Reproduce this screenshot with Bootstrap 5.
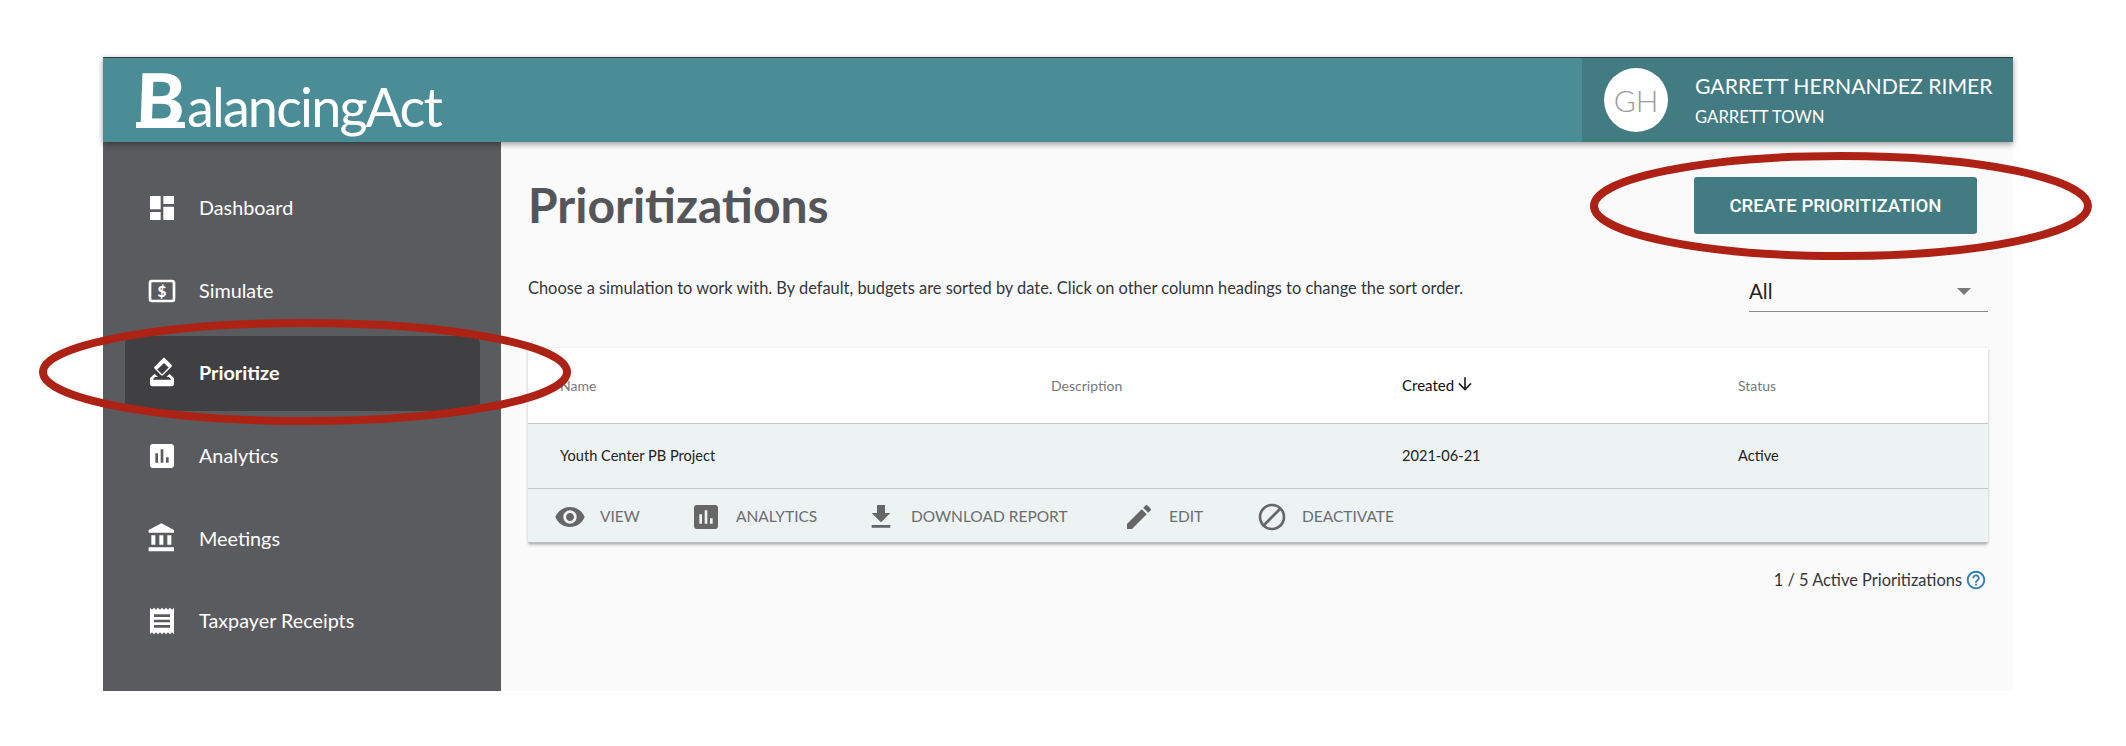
<!doctype html>
<html lang="en">
<head>
<meta charset="utf-8">
<title>Prioritizations</title>
<link href="https://cdn.jsdelivr.net/npm/bootstrap@5.3.0/dist/css/bootstrap.min.css" rel="stylesheet">
<style>
html,body{height:746px;overflow:hidden;background:#fff}
body{font-family:"Lato",sans-serif;position:relative;padding:57px 113px 55px 103px}
.ba-app{width:1910px;height:634px;background:#fafafa;display:flex;flex-direction:column}
.ba-top{height:85px;flex:none;background:#4b8d96;border-top:1px solid #2c3e42;box-shadow:0 2px 6px rgba(0,0,0,.4);position:relative;z-index:2;display:flex;justify-content:space-between}
.ba-logo{display:flex;align-items:baseline;color:#fff;padding:0 0 0 33px;height:84px;line-height:1;position:relative}
.ba-logo-b{font-family:"Lato",sans-serif;font-weight:900;font-size:74px;width:49px;margin-top:4px;transform:skewX(-2deg);letter-spacing:0}
.ba-logo-bar{position:absolute;left:33px;top:64px;width:49px;height:6px;background:#fff}
.ba-logo-t{font-weight:400;font-size:54px;letter-spacing:-1.85px;margin-left:2px}
.ba-user{width:431px;background:#437b82;display:flex;align-items:center;color:#fff;padding-left:22px}
.ba-avatar{width:64px;height:64px;border-radius:50%;background:#fff;color:#9a9a9a;font-size:30px;font-weight:300;display:flex;align-items:center;justify-content:center;margin-right:27px}
.ba-name{font-size:21.2px;line-height:28px}
.ba-town{font-size:16.7px;line-height:24px;margin-top:5px}
.ba-body{flex:1;display:flex;min-height:0}
.ba-side{width:398px;flex:none;background:#5a5b5f;padding:28.5px 21px 0 22px}
.ba-nav{display:flex;align-items:center;height:75px;margin-bottom:7.6px;color:#fff;font-size:19.8px;padding-left:21px;border-radius:8px;text-decoration:none}
.ba-nav svg{width:32px;height:32px;fill:#fff;flex:none;margin-right:21px}
.ba-nav.is-on{background:#404042;font-weight:700}
.ba-main{flex:1;padding:35px 25px 0 27px;min-width:0}
.ba-head{display:flex;justify-content:space-between;align-items:flex-start;height:82px}
.ba-title{font-size:48px;font-weight:700;color:#54565a;margin:0;line-height:56px}
.ba-btn{width:283px;height:57px;margin-right:11px;background:#437b82;border:0;border-radius:3px;color:#fff;font:500 18.6px "Roboto",sans-serif}
.ba-btn:hover{background:#437b82;color:#fff}
.ba-intro{display:flex;justify-content:space-between;align-items:flex-start;height:72px;margin-top:17px}
.ba-intro p{margin:0;font-size:16.4px;line-height:24px;color:#33363b}
.ba-sel{width:239px;height:40px;border-bottom:1px solid #8a8a8a;display:flex;justify-content:space-between;align-items:center;font-size:20.5px;color:#222;font-weight:400;padding-right:17px;margin-top:-4.5px}
.ba-caret{width:0;height:0;border-left:7px solid transparent;border-right:7px solid transparent;border-top:7px solid #777}
.ba-card{background:#fff;border:0;box-shadow:0 1px 3px rgba(0,0,0,.25);border-radius:2px;overflow:hidden}
.ba-tbl{table-layout:fixed;margin:0;width:100%}
.ba-tbl th,.ba-tbl td{padding:0 0 0 32px;vertical-align:middle;border-color:#c3c7c7;font-size:14.6px;color:#222;box-shadow:none}
.ba-tbl th{height:75px;font-weight:400;color:#77797c;background:#fff;font-size:14px}
.ba-tbl th.is-sort{color:#111;font-size:15px}
.ba-tbl td{height:65px;background:#edf3f3}
.ba-arrow{width:20px;height:20px;fill:#222;vertical-align:-3px;margin-left:-3px}
.ba-acts{height:55px;padding-top:3px;background:#edf3f3;border-bottom:2px solid #bcbebe;display:flex;align-items:center;color:#6b6d6f;font-size:15.5px}
.ba-actrow{display:flex;align-items:center;padding-left:26px}
.ba-actitem{display:flex;align-items:center}
.ba-actitem svg{width:32px;height:32px;fill:#666;margin-right:14px;flex:none}
.ba-count{display:flex;justify-content:flex-end;align-items:center;margin-top:24px;font-size:16.4px;color:#33363b;padding-right:1px}
.ba-count svg{width:22px;height:22px;fill:#2f7fb5;margin-left:3px}
.ba-rings{position:absolute;left:0;top:0;width:2126px;height:746px;z-index:5;pointer-events:none}
.ba-rings ellipse{fill:none;stroke:#ae2215;stroke-width:8}
</style>
</head>
<body>
<div class="ba-app">
  <header class="ba-top">
    <div class="ba-logo"><span class="ba-logo-b">B</span><span class="ba-logo-bar"></span><span class="ba-logo-t">alancingAct</span></div>
    <div class="ba-user">
      <div class="ba-avatar">GH</div>
      <div><div class="ba-name">GARRETT HERNANDEZ RIMER</div><div class="ba-town">GARRETT TOWN</div></div>
    </div>
  </header>
  <div class="ba-body">
    <nav class="ba-side">
      <a class="ba-nav" href="#"><svg viewBox="0 0 24 24"><path d="M3 13h8V3H3v10zm0 8h8v-6H3v6zm10 0h8V11h-8v10zm0-18v6h8V3h-8z"/></svg>Dashboard</a>
      <a class="ba-nav" href="#"><svg viewBox="0 0 24 24"><rect x="3" y="4.5" width="18" height="15" rx="1.5" fill="none" stroke="#fff" stroke-width="2"/><text x="12" y="16.3" text-anchor="middle" font-size="11.5" font-weight="900" fill="#fff" font-family="Lato">$</text></svg>Simulate</a>
      <a class="ba-nav is-on" href="#"><svg viewBox="0 0 24 24"><path d="M18 13h-.68l-2 2h1.91L19 17H5l1.78-2h2.05l-2-2H6l-3 3v4c0 1.1.89 2 1.99 2H19c1.1 0 2-.89 2-2v-4l-3-3zm-1-5.05l-4.95 4.95-3.54-3.54 4.95-4.95L17 7.95zm-4.24-7.07L6.39 7.24c-.39.39-.39 1.02 0 1.41l4.95 4.95c.39.39 1.02.39 1.41 0l6.36-6.36c.39-.39.39-1.02 0-1.41L14.16.88c-.38-.39-1.01-.39-1.4 0z"/></svg>Prioritize</a>
      <a class="ba-nav" href="#"><svg viewBox="0 0 24 24"><path d="M19 3H5c-1.1 0-2 .9-2 2v14c0 1.1.9 2 2 2h14c1.1 0 2-.9 2-2V5c0-1.1-.9-2-2-2zM9 17H7v-7h2v7zm4 0h-2V7h2v10zm4 0h-2v-4h2v4z"/></svg>Analytics</a>
      <a class="ba-nav" href="#"><svg viewBox="0 0 24 24"><path d="M4 10v7h3v-7H4zm6 0v7h3v-7h-3zM2 22h19v-3H2v3zm14-12v7h3v-7h-3zm-4.5-9L2 6v2h19V6l-9.5-5z"/></svg>Meetings</a>
      <a class="ba-nav" href="#"><svg viewBox="0 0 24 24"><path d="M18 17H6v-2h12v2zm0-4H6v-2h12v2zm0-4H6V7h12v2zM3 22l1.5-1.5L6 22l1.5-1.5L9 22l1.5-1.5L12 22l1.5-1.5L15 22l1.5-1.5L18 22l1.5-1.5L21 22V2l-1.5 1.5L18 2l-1.5 1.5L15 2l-1.5 1.5L12 2l-1.5 1.5L9 2 7.5 3.5 6 2 4.5 3.5 3 2v20z"/></svg>Taxpayer Receipts</a>
    </nav>
    <main class="ba-main">
      <div class="ba-head">
        <h1 class="ba-title">Prioritizations</h1>
        <button class="btn ba-btn" type="button">CREATE PRIORITIZATION</button>
      </div>
      <div class="ba-intro">
        <p>Choose a simulation to work with. By default, budgets are sorted by date. Click on other column headings to change the sort order.</p>
        <div class="ba-sel"><span>All</span><span class="ba-caret"></span></div>
      </div>
      <div class="card ba-card">
        <table class="table ba-tbl">
          <colgroup><col style="width:491px"><col style="width:351px"><col style="width:336px"><col></colgroup>
          <thead><tr><th>Name</th><th>Description</th><th class="is-sort">Created <svg class="ba-arrow" viewBox="0 0 24 24"><path d="M20 12l-1.41-1.41L13 16.17V4h-2v12.17l-5.58-5.59L4 12l8 8 8-8z"/></svg></th><th>Status</th></tr></thead>
          <tbody><tr><td>Youth Center PB Project</td><td></td><td>2021-06-21</td><td>Active</td></tr></tbody>
        </table>
        <div class="ba-acts">
          <div class="ba-actrow">
            <div class="ba-actitem" style="width:136px"><svg viewBox="0 0 24 24"><path d="M12 4.5C7 4.5 2.73 7.61 1 12c1.73 4.39 6 7.5 11 7.5s9.27-3.11 11-7.5c-1.73-4.39-6-7.5-11-7.5zM12 17c-2.76 0-5-2.24-5-5s2.24-5 5-5 5 2.24 5 5-2.24 5-5 5zm0-8c-1.66 0-3 1.34-3 3s1.34 3 3 3 3-1.34 3-3-1.34-3-3-3z"/></svg>VIEW</div>
            <div class="ba-actitem" style="width:175px"><svg viewBox="0 0 24 24"><path d="M19 3H5c-1.1 0-2 .9-2 2v14c0 1.1.9 2 2 2h14c1.1 0 2-.9 2-2V5c0-1.1-.9-2-2-2zM9 17H7v-7h2v7zm4 0h-2V7h2v10zm4 0h-2v-4h2v4z"/></svg>ANALYTICS</div>
            <div class="ba-actitem" style="width:258px"><svg viewBox="0 0 24 24"><path d="M19 9h-4V3H9v6H5l7 7 7-7zM5 18v2h14v-2H5z"/></svg>DOWNLOAD REPORT</div>
            <div class="ba-actitem" style="width:133px"><svg viewBox="0 0 24 24"><path d="M3 17.25V21h3.75L17.81 9.94l-3.75-3.75L3 17.25zM20.71 7.04c.39-.39.39-1.02 0-1.41l-2.34-2.34c-.39-.39-1.02-.39-1.41 0l-1.83 1.83 3.75 3.75 1.83-1.83z"/></svg>EDIT</div>
            <div class="ba-actitem"><svg viewBox="0 0 24 24"><path d="M12 2C6.48 2 2 6.48 2 12s4.48 10 10 10 10-4.48 10-10S17.52 2 12 2zM4 12c0-4.42 3.58-8 8-8 1.85 0 3.55.63 4.9 1.69L5.69 16.9C4.63 15.55 4 13.85 4 12zm8 8c-1.85 0-3.55-.63-4.9-1.69L18.31 7.1C19.37 8.45 20 10.15 20 12c0 4.42-3.58 8-8 8z"/></svg>DEACTIVATE</div>
          </div>
        </div>
      </div>
      <div class="ba-count">1 / 5 Active Prioritizations<svg viewBox="0 0 24 24"><path d="M11 18h2v-2h-2v2zm1-16C6.48 2 2 6.48 2 12s4.48 10 10 10 10-4.48 10-10S17.52 2 12 2zm0 18c-4.41 0-8-3.59-8-8s3.59-8 8-8 8 3.59 8 8-3.59 8-8 8zm0-14c-2.21 0-4 1.79-4 4h2c0-1.1.9-2 2-2s2 .9 2 2c0 2-3 1.75-3 5h2c0-2.25 3-2.5 3-5 0-2.21-1.79-4-4-4z"/></svg></div>
    </main>
  </div>
</div>
<svg class="ba-rings" viewBox="0 0 2126 746"><ellipse cx="305" cy="372" rx="262" ry="49"/><ellipse cx="1841" cy="206" rx="247" ry="50"/></svg>
<script src="https://cdn.jsdelivr.net/npm/bootstrap@5.3.0/dist/js/bootstrap.bundle.min.js"></script>
</body>
</html>
